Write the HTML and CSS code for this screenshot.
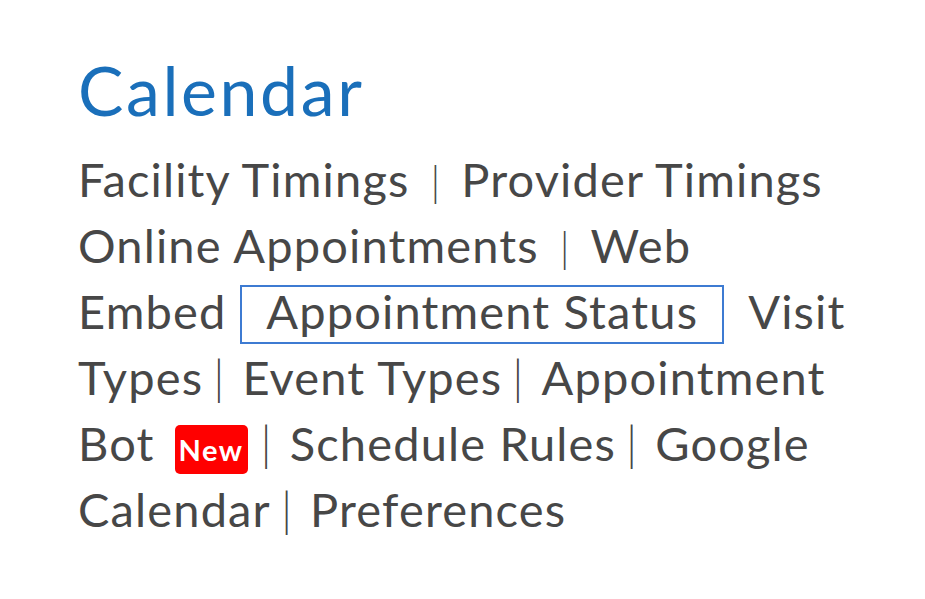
FILE: index.html
```html
<!doctype html>
<html lang="en">
    <head>
        <title>Calendar</title>
        <link rel="stylesheet" href="styles.css">
    </head>
    <body>
        <div class="section">
            <h1 class="title">Calendar</h1>
            <p class="links">
                <a class="link">Facility Timings</a><span class="sep wide">|</span><a class="link">Provider Timings</a><br>
                <a class="link">Online Appointments</a><span class="sep wide">|</span><a class="link">Web</a><br>
                <a class="link">Embed</a><a class="link active">Appointment Status</a><a class="link">Visit</a><br>
                <a class="link">Types</a><span class="sep">|</span><a class="link">Event Types</a><span class="sep">|</span><a class="link">Appointment</a><br>
                <a class="link">Bot</a><span class="badge">New</span><span class="sep">|</span><a class="link">Schedule Rules</a><span class="sep">|</span><a class="link">Google</a><br>
                <a class="link">Calendar</a><span class="sep">|</span><a class="link">Preferences</a>
            </p>
        </div>
    </body>
</html>
```

FILE: styles.css
```css
body {
    margin: 0;
    background: #ffffff;
    font-family: Lato, "Noto Sans", sans-serif;
    color: #474747;
}
.section {
    padding: 50px 0 0 78px;
}
.title {
    margin: 0;
    font-size: 68px;
    font-weight: 400;
    letter-spacing: 2.6px;
    line-height: 80px;
    color: #1a6fba;
}
.links {
    margin: 0;
    padding-top: 16px;
    font-size: 47px;
    letter-spacing: 1.15px;
    line-height: 66px;
    white-space: nowrap;
}
.link {
    color: #474747;
    text-decoration: none;
}
.sep {
    margin: 0 18px 0 10px;
    font-weight: 300;
    line-height: 40px;
    letter-spacing: 0;
}
.sep.wide {
    margin: 0 21px;
    font-size: 41px;
}
.active {
    display: inline-block;
    margin: 0 24px 0 14px;
    padding: 0 24px 7px;
    line-height: 48px;
    border: 2px solid #3d7bd2;
}
.badge {
    display: inline-block;
    margin: 0 3px 0 20px;
    padding: 0 4px;
    background: #ff0000;
    border-radius: 5px;
    color: #ffffff;
    font-size: 29px;
    font-weight: 700;
    letter-spacing: 1.5px;
    line-height: 49px;
    vertical-align: middle;
}
```
